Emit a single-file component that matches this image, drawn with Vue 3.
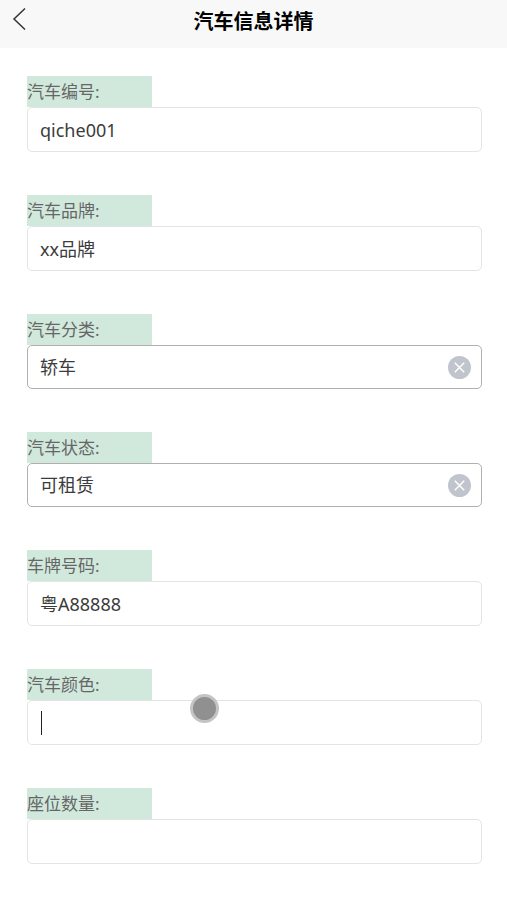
<script setup>
import { ref } from 'vue'

const fields = ref([
  { id: 'code', label: '汽车编号:', value: 'qiche001' },
  { id: 'brand', label: '汽车品牌:', value: 'xx品牌' },
  { id: 'type', label: '汽车分类:', value: '轿车', clearable: true },
  { id: 'status', label: '汽车状态:', value: '可租赁', clearable: true },
  { id: 'plate', label: '车牌号码:', value: '粤A88888' },
  { id: 'color', label: '汽车颜色:', value: '', active: true },
  { id: 'seats', label: '座位数量:', value: '' },
])
</script>

<template>
  <div class="page">
    <header class="bar">
      <button class="back" type="button" aria-label="返回">
        <svg width="14" height="24" viewBox="0 0 14 24"><path d="M13 1.5 L2 12 L13 22.5" /></svg>
      </button>
      <h1>汽车信息详情</h1>
    </header>
    <form class="form" @submit.prevent>
      <div v-for="f in fields" :key="f.id" class="field">
        <label :for="f.id">{{ f.label }}</label>
        <div class="box" :class="{ strong: f.clearable }">
          <span v-if="f.active" class="caret"></span>
          <input :id="f.id" v-model="f.value" type="text" autocomplete="off" />
          <button v-if="f.clearable" class="clear" type="button" aria-label="清除" @click="f.value = ''">
            <svg width="23" height="23" viewBox="0 0 23 23">
              <circle cx="11.5" cy="11.5" r="11.5" />
              <path d="M6.8 6.8 L16.2 16.2 M16.2 6.8 L6.8 16.2" />
            </svg>
          </button>
        </div>
      </div>
    </form>
    <div class="touch"></div>
  </div>
</template>

<style>
body {
  background: #fff;
}
</style>

<style scoped>
.page {
  position: relative;
  font-family: "Noto Sans", "Noto Sans CJK SC", sans-serif;
  color: #333;
}
.bar {
  display: grid;
  grid-template-columns: 48px 1fr 48px;
  align-items: center;
  height: 48px;
  background: #f8f8f8;
}
.back,
.clear {
  display: flex;
  padding: 0;
  border: 0;
  background: none;
}
.back {
  padding: 0 0 10px 12px;
}
.back path {
  fill: none;
  stroke: #333;
  stroke-width: 1.5;
}
h1 {
  margin: 0;
  padding-bottom: 4px;
  font-size: 20px;
  line-height: 30px;
  font-weight: 700;
  text-align: center;
  color: #000;
}
.form {
  display: flex;
  flex-direction: column;
  gap: 43px;
  padding: 28px 25px 32px 27px;
}
.field {
  display: flex;
  flex-direction: column;
}
label {
  width: 125px;
  padding-top: 1px;
  background: #d1e9dd;
  color: #666;
  font-size: 17px;
  line-height: 30px;
}
.box {
  display: flex;
  align-items: center;
  box-sizing: border-box;
  height: 45px;
  padding: 0 10px 0 12px;
  border: 1px solid #e4e4e4;
  border-radius: 5px;
  background: #fff;
}
.box.strong {
  height: 44px;
  border-color: #b4aeae;
}
input {
  flex: 1;
  min-width: 0;
  padding: 0;
  border: 0;
  outline: 0;
  background: none;
  color: #3c3c3c;
  font: inherit;
  font-size: 18px;
  line-height: 26px;
}
.caret {
  width: 1px;
  height: 24px;
  margin-left: 1px;
  background: #222;
}
.clear circle {
  fill: #c0c4cc;
}
.clear path {
  fill: none;
  stroke: #fff;
  stroke-width: 1.5;
}
.touch {
  position: absolute;
  left: 190px;
  top: 694px;
  box-sizing: border-box;
  width: 29px;
  height: 29px;
  border: 3px solid #c4c4c4;
  border-radius: 50%;
  background: #909090;
}
</style>
